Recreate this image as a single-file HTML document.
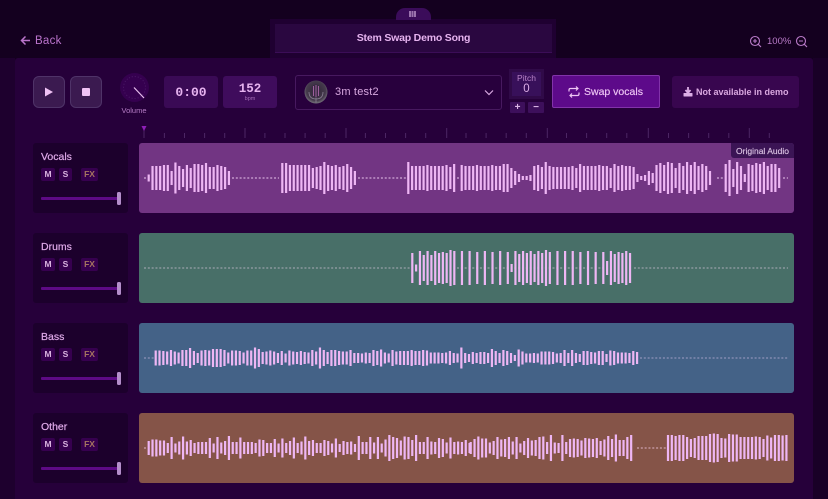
<!DOCTYPE html>
<html><head><meta charset="utf-8"><title>Stem Swap</title>
<style>
*{box-sizing:border-box;margin:0;padding:0}
html,body{width:828px;height:499px;overflow:hidden;background:#14001f;font-family:"Liberation Sans",sans-serif}
.a{position:absolute}
.t{position:absolute;white-space:nowrap;line-height:1}
.c{text-align:center}
.card{position:absolute;left:33px;width:95px;height:70px;background:#1c002c;border-radius:3px}
.card b{position:absolute;left:8px;top:8px;font-size:10.5px;line-height:12px;font-weight:400;color:#dfa9e9;-webkit-text-stroke:.2px #dfa9e9}
.btn{position:absolute;top:25px;height:13px;background:#36004f;border-radius:2px;font-size:8.5px;line-height:13px;text-align:center;font-weight:700;color:#d9b3e0}
.m{left:8px;width:14px}.s{left:26px;width:13px}.fx{left:48px;width:17px;color:#a57560}
.sl{position:absolute;left:8px;top:54px;width:78px;height:3px;background:#5d0a85;border-radius:1px}
.th{position:absolute;left:84px;top:49px;width:4px;height:13px;background:#b48ecb;border-radius:1.5px}
.tr{position:absolute;left:139px;width:655px;height:69.5px;border-radius:3px}
</style></head><body>
<div class="a" style="left:0;top:58px;width:15px;height:441px;background:#1e002e"></div>
<div class="a" style="left:15px;top:58px;width:798px;height:441px;background:#26003a;border-radius:3px 3px 0 0"></div>
<div class="a" style="left:813px;top:58px;width:15px;height:441px;background:#190027"></div>
<div class="a" style="left:270px;top:19px;width:286px;height:39px;background:#1f0031"></div>
<div class="a" style="left:275px;top:24px;width:277px;height:29px;background:#2a0740;border-bottom:1px solid #3b0d57"></div>
<div class="a" style="left:396px;top:8px;width:35px;height:12px;background:#3b0c5a;border-radius:9px 9px 0 0"></div>
<div class="a" style="left:409px;top:11px;width:1.5px;height:6px;background:#9a72ad;box-shadow:2.5px 0 #9a72ad,5px 0 #9a72ad"></div>
<div class="t c" style="left:275px;top:33px;width:277px;font-size:10.5px;font-weight:700;letter-spacing:-.2px;color:#e6b3ef">Stem Swap Demo Song</div>
<div class="t" style="left:35px;top:35.5px;font-size:11.5px;color:#bb74cc;letter-spacing:.25px">Back</div>
<div class="t" style="left:767px;top:37px;font-size:9.5px;color:#b97ac8">100%</div>

<div class="a" style="left:33px;top:76px;width:32px;height:32px;background:#3b1a50;border:1px solid #4f3368;border-radius:6px"></div>
<div class="a" style="left:70px;top:76px;width:32px;height:32px;background:#3b1a50;border:1px solid #4f3368;border-radius:6px"></div>
<div class="a" style="left:120px;top:73px;width:29px;height:29px;background:#35004f;border-radius:50%"></div>
<div class="t c" style="left:114px;top:106.5px;width:40px;font-size:7.5px;color:#b57cc5">Volume</div>
<div class="a" style="left:164px;top:76px;width:54px;height:32px;background:#3a0a55;border-radius:3px"></div>
<div class="t c" style="left:164px;top:86px;width:54px;font:700 13px/1 'Liberation Mono',monospace;color:#e6b3ef">0:00</div>
<div class="a" style="left:223px;top:76px;width:54px;height:32px;background:#3f0c5c;border-radius:3px"></div>
<div class="t c" style="left:223px;top:82.5px;width:54px;font:700 12.5px/1 'Liberation Mono',monospace;color:#e6b3ef">152</div>
<div class="t c" style="left:223px;top:97px;width:54px;font-size:5.5px;color:#a36bb5">bpm</div>

<div class="a" style="left:295px;top:75px;width:207px;height:35px;border:1px solid #47195f;border-radius:3px;background:#28003d"></div>
<div class="t" style="left:335px;top:87px;font-size:11px;color:#d8a8e0;letter-spacing:.2px">3m test2</div>

<div class="a" style="left:509px;top:69px;width:35px;height:30px;background:#300a48"></div>
<div class="a" style="left:512px;top:72px;width:29px;height:24px;background:#38105a"></div>
<div class="t c" style="left:509px;top:73.5px;width:35px;font-size:8.5px;color:#bb84c9">Pitch</div>
<div class="t c" style="left:509px;top:84px;width:35px;font-size:11.5px;color:#dcaee6">0</div>
<div class="a" style="left:510px;top:102px;width:15px;height:11px;background:#3d0f5b;border-radius:1px"></div>
<div class="a" style="left:528px;top:102px;width:16px;height:11px;background:#3d0f5b;border-radius:1px"></div>
<div class="t c" style="left:510px;top:102.5px;width:15px;font-size:10px;font-weight:700;color:#dcb5e6">+</div>
<div class="t c" style="left:528px;top:102.5px;width:16px;font-size:10px;font-weight:700;color:#dcb5e6">−</div>

<div class="a" style="left:552px;top:75px;width:108px;height:33px;background:#5d0a8a;border:1px solid #8233aa;border-radius:2px"></div>
<div class="t" style="left:584px;top:87px;font-size:10.5px;color:#efc6f5;-webkit-text-stroke:.15px #efc6f5">Swap vocals</div>
<div class="a" style="left:672px;top:76px;width:127px;height:32px;background:#38064f;border-radius:3px"></div>
<div class="t" style="left:696px;top:87.5px;font-size:9px;font-weight:700;color:#d9a8e0">Not available in demo</div>

<div class="card" style="top:143px"><b>Vocals</b><div class="btn m">M</div><div class="btn s">S</div><div class="btn fx">FX</div><div class="sl"></div><div class="th"></div></div>
<div class="card" style="top:233px"><b>Drums</b><div class="btn m">M</div><div class="btn s">S</div><div class="btn fx">FX</div><div class="sl"></div><div class="th"></div></div>
<div class="card" style="top:323px"><b>Bass</b><div class="btn m">M</div><div class="btn s">S</div><div class="btn fx">FX</div><div class="sl"></div><div class="th"></div></div>
<div class="card" style="top:413px"><b>Other</b><div class="btn m">M</div><div class="btn s">S</div><div class="btn fx">FX</div><div class="sl"></div><div class="th"></div></div>

<div class="tr" style="top:143.3px;background:#723583"></div>
<div class="tr" style="top:233.3px;background:#486f68"></div>
<div class="tr" style="top:323px;background:#446287"></div>
<div class="tr" style="top:413px;background:#855448"></div>

<svg class="a" style="left:0;top:0" width="828" height="499" viewBox="0 0 828 499" fill="none">
<defs><radialGradient id="av" cx=".5" cy=".45" r=".6"><stop offset="0" stop-color="#2f2436"/><stop offset=".7" stop-color="#453a4c"/><stop offset="1" stop-color="#8a8a90"/></radialGradient></defs>
<path d="M30 40.5H22M25.5 36.5L21.5 40.5L25.5 44.5" stroke="#bb74cc" stroke-width="1.5"/>
<circle cx="755" cy="41" r="4.5" stroke="#b97ac8" stroke-width="1.1"/><path d="M758.3 44.3L761 47M753 41h4M755 39v4" stroke="#b97ac8" stroke-width="1.1"/>
<circle cx="801" cy="41" r="4.5" stroke="#b97ac8" stroke-width="1.1"/><path d="M804.3 44.3L807 47M799 41h4" stroke="#b97ac8" stroke-width="1.1"/>
<path d="M45 87.5V96.5L53 92Z" fill="#f0c2f5"/>
<rect x="82" y="88" width="8" height="8" rx="1" fill="#f0c2f5"/>
<circle cx="134.5" cy="87.5" r="11" stroke="#5a2a78" stroke-width="1" stroke-dasharray="1 2" transform="rotate(-120 134.5 87.5)" stroke-opacity=".6"/>
<path d="M134 87.5L144 98" stroke="#e8c0ee" stroke-width="1.2"/>
<circle cx="316" cy="92" r="11.5" fill="url(#av)"/>
<rect x="312" y="84.5" width="8" height="13" rx="4" fill="#3a2a44"/>
<path d="M313.5 86v10M316 85v12M318.5 86v10" stroke="#b76fb2" stroke-width=".8"/>
<path d="M316 97.5v5M309 92c0 5 3 7 7 7s7-2 7-7" stroke="#8a7f94" stroke-width=".8"/>
<path d="M485 90.5L489 94.5L493 90.5" stroke="#d8a8e0" stroke-width="1.2"/>
<path d="M569 91.5v-1.500c0-1 .6-1.500 1.500-1.500H578M576 86.500l2 2-2 2M579 92.500v1.500c0 1-.6 1.500-1.500 1.500H570M572 93.500l-2 2 2 2" stroke="#efc6f5" stroke-width="1.2"/>
<path d="M688 87v5M685.5 90l2.500 3 2.500-3" stroke="#ddaee6" stroke-width="1.8"/>
<rect x="683.5" y="93" width="9" height="3.5" rx=".5" fill="#ddaee6"/>
<path d="M164.4 133v5M184.5 133v5M204.6 133v5M224.7 133v5M264.9 133v5M285 133v5M305.1 133v5M325.2 133v5M365.4 133v5M385.5 133v5M405.6 133v5M425.7 133v5M466 133v5M486.1 133v5M506.2 133v5M526.3 133v5M566.5 133v5M586.6 133v5M606.7 133v5M626.8 133v5M668.5 133v5M688.6 133v5M708.7 133v5M728.8 133v5M769.3 133v5" stroke="#4c2664" stroke-width="1"/>
<path d="M245 128v10M346 128v10M446.7 128v10M547.3 128v10M648.3 128v10M749.3 128v10M144 130v8" stroke="#4c2664" stroke-width="1"/>
<path d="M141.5 126h5l-2.500 5z" fill="#8f1fb8"/>

<path d="M232 178H279M358 178H406M457 178H459M717 178H723M783 178H788M144 178H147" stroke="#e9c5ee" stroke-width="1.2" stroke-dasharray="2 1.82" stroke-opacity=".8"/>
<path d="M144 268H411M634 268H788M457 268H604" stroke="#d6c6dc" stroke-width="1.1" stroke-dasharray="2 1.82" stroke-opacity=".7"/>
<path d="M144 358H154M640 358H788" stroke="#c8b8e0" stroke-width="1.1" stroke-dasharray="2 1.82" stroke-opacity=".7"/>
<path d="M144 448H147M637 448H666" stroke="#e6bcd0" stroke-width="1.2" stroke-dasharray="2 1.82" stroke-opacity=".75"/>

<g stroke="#eeb6f4" stroke-width="2.2">
<path d="M144.88 178m3.82-3.5v7m0-3.5m3.82-12v24m0-12m3.82-12v24m0-12m3.82-12v24m0-12m3.82-13v26m0-13m3.82-13v26m0-13m3.82-7v14m0-7m3.82-15.5v31m0-15.5m3.82-12v24m0-12m3.82-9v18m0-9m3.82-13v26m0-13m3.82-10v20m0-10m3.82-14v28m0-14m3.82-14v28m0-14m3.82-13v26m0-13m3.82-15v30m0-15m3.82-11v22m0-11m3.82-11v22m0-11m3.82-13v26m0-13m3.82-12v24m0-12m3.82-11v22m0-11m3.82-7v14m0-7"/>
<path d="M278.48 178m3.82-15v30m0-15m3.82-15v30m0-15m3.82-13v26m0-13m3.82-13v26m0-13m3.82-13v26m0-13m3.82-13v26m0-13m3.82-13v26m0-13m3.82-13v26m0-13m3.82-10v20m0-10m3.82-11v22m0-11m3.82-12v24m0-12m3.82-16v32m0-16m3.82-13v26m0-13m3.82-12v24m0-12m3.82-13v26m0-13m3.82-11v22m0-11m3.82-12v24m0-12m3.82-14v28m0-14m3.82-11v22m0-11m3.82-7v14m0-7"/>
<path d="M404.48 178m3.82-16v32m0-16m3.82-12v24m0-12m3.82-12v24m0-12m3.82-12v24m0-12m3.82-12v24m0-12m3.82-13v26m0-13m3.82-12v24m0-12m3.82-12v24m0-12m3.82-12v24m0-12m3.82-12v24m0-12m3.82-13v26m0-13m3.82-11v22m0-11m3.82-14v28m0-14"/>
<path d="M457.88 178m3.82-13v26m0-13m3.82-12v24m0-12m3.82-12v24m0-12m3.82-12v24m0-12m3.82-13v26m0-13m3.82-12v24m0-12m3.82-12v24m0-12m3.82-12v24m0-12m3.82-13v26m0-13m3.82-12v24m0-12m3.82-12v24m0-12m3.82-14v28m0-14m3.82-14v28m0-14m3.82-10v20m0-10m3.82-7v14m0-7m3.82-4v8m0-4m3.82-2v4m0-2m3.82-2v4m0-2m3.82-3v6m0-3m3.82-12v24m0-12m3.82-13v26m0-13m3.82-11v22m0-11m3.82-16v32m0-16m3.82-12v24m0-12m3.82-11v22m0-11m3.82-11v22m0-11m3.82-11v22m0-11m3.82-11v22m0-11m3.82-11v22m0-11m3.82-12v24m0-12m3.82-10v20m0-10m3.82-14v28m0-14m3.82-12v24m0-12m3.82-12v24m0-12m3.82-12v24m0-12m3.82-12v24m0-12m3.82-13v26m0-13m3.82-12v24m0-12m3.82-12v24m0-12m3.82-10v20m0-10m3.82-14v28m0-14m3.82-12v24m0-12m3.82-13v26m0-13m3.82-12v24m0-12m3.82-12v24m0-12m3.82-11v22m0-11m3.82-4v8m0-4m3.82-2v4m0-2m3.82-3v6m0-3m3.82-7v14m0-7m3.82-5v10m0-5m3.82-13v26m0-13m3.82-15v30m0-15m3.82-13v26m0-13m3.82-16v32m0-16m3.82-15v30m0-15m3.82-10v20m0-10m3.82-15v30m0-15m3.82-12v24m0-12m3.82-16v32m0-16m3.82-13v26m0-13m3.82-16v32m0-16m3.82-12v24m0-12m3.82-14v28m0-14m3.82-12v24m0-12m3.82-7v14m0-7"/>
<path d="M721.88 178m3.82-14v28m0-14m3.82-18v36m0-18m3.82-9v18m0-9m3.82-16v32m0-16m3.82-12v24m0-12m3.82-4v8m0-4m3.82-14v28m0-14m3.82-13v26m0-13m3.82-15v30m0-15m3.82-14v28m0-14m3.82-16v32m0-16m3.82-12v24m0-12m3.82-14v28m0-14m3.82-14v28m0-14m3.82-10v20m0-10"/>

<path d="M408.48 268m3.82-15v30m0-15m3.82-3.5v7m0-3.5m3.82-17v34m0-17m3.82-13v26m0-13m3.82-17v34m0-17m3.82-13v26m0-13m3.82-17v34m0-17m3.82-15v30m0-15m3.82-16v32m0-16m3.82-15v30m0-15m3.82-18v36m0-18m3.82-17v34m0-17m7.64-17v34m0-17m7.64-17v34m0-17m7.64-16v32m0-16m7.64-17v34m0-17m7.64-16v32m0-16m7.64-17v34m0-17m7.64-16v32m0-16m3.82-4v8m0-4m3.82-17v34m0-17m3.82-14v28m0-14m3.82-17v34m0-17m3.82-15v30m0-15m3.82-17v34m0-17m3.82-14v28m0-14m3.82-17v34m0-17m3.82-15v30m0-15m3.82-18v36m0-18m3.82-16v32m0-16m7.64-17v34m0-17m7.64-17v34m0-17m7.64-17v34m0-17m7.64-16v32m0-16m7.64-17v34m0-17m7.64-16v32m0-16m7.64-16v32m0-16m3.82-7v14m0-7m3.82-17v34m0-17m3.82-14v28m0-14m3.82-16v32m0-16m3.82-15v30m0-15m3.82-17v34m0-17m3.82-15v30m0-15"/>

<path d="M151.88 358m3.82-7.5v15m0-7.5m3.82-7.5v15m0-7.5m3.82-7v14m0-7m3.82-6.5v13m0-6.5m3.82-8v16m0-8m3.82-6.5v13m0-6.5m3.82-5.5v11m0-5.5m3.82-8v16m0-8m3.82-8v16m0-8m3.82-10v20m0-10m3.82-7v14m0-7m3.82-5v10m0-5m3.82-7.5v15m0-7.5m3.82-8v16m0-8m3.82-7.5v15m0-7.5m3.82-9v18m0-9m3.82-9v18m0-9m3.82-9v18m0-9m3.82-8v16m0-8m3.82-5.5v11m0-5.5m3.82-7.5v15m0-7.5m3.82-7.5v15m0-7.5m3.82-7v14m0-7m3.82-5.5v11m0-5.5m3.82-7.5v15m0-7.5m3.82-7.5v15m0-7.5m3.82-10.5v21m0-10.5m3.82-9v18m0-9m3.82-6v12m0-6m3.82-6.5v13m0-6.5m3.82-7.5v15m0-7.5m3.82-6.5v13m0-6.5m3.82-5v10m0-5m3.82-7v14m0-7m3.82-4.5v9m0-4.5m3.82-7.5v15m0-7.5m3.82-6.5v13m0-6.5m3.82-6v12m0-6m3.82-7v14m0-7m3.82-6v12m0-6m3.82-5.5v11m0-5.5m3.82-8v16m0-8m3.82-6.5v13m0-6.5m3.82-10.5v21m0-10.5m3.82-8v16m0-8m3.82-6v12m0-6m3.82-8v16m0-8m3.82-8v16m0-8m3.82-7v14m0-7m3.82-6.5v13m0-6.5m3.82-6.5v13m0-6.5m3.82-8v16m0-8m3.82-5v10m0-5m3.82-5v10m0-5m3.82-4.5v9m0-4.5m3.82-5.5v11m0-5.5m3.82-5v10m0-5m3.82-8v16m0-8m3.82-7v14m0-7m3.82-8.5v17m0-8.5m3.82-5.5v11m0-5.5m3.82-4.5v9m0-4.5m3.82-8v16m0-8m3.82-6.5v13m0-6.5m3.82-7v14m0-7m3.82-7v14m0-7m3.82-7v14m0-7m3.82-8v16m0-8"/>
<path d="M407.88 358m3.82-7v14m0-7m3.82-7v14m0-7m3.82-7v14m0-7m3.82-8v16m0-8m3.82-7.5v15m0-7.5m3.82-5.5v11m0-5.5m3.82-5.5v11m0-5.5m3.82-5.5v11m0-5.5m3.82-5v10m0-5m3.82-5.5v11m0-5.5m3.82-7v14m0-7m3.82-5v10m0-5m3.82-4.5v9m0-4.5m3.82-10.5v21m0-10.5m3.82-5v10m0-5m3.82-4v8m0-4m3.82-6v12m0-6m3.82-5v10m0-5m3.82-6v12m0-6m3.82-6v12m0-6m3.82-5v10m0-5m3.82-9v18m0-9m3.82-7v14m0-7m3.82-5v10m0-5m3.82-8v16m0-8m3.82-7v14m0-7m3.82-5v10m0-5m3.82-3v6m0-3m3.82-8.5v17m0-8.5m3.82-6.5v13m0-6.5m3.82-4.5v9m0-4.5m3.82-4.5v9m0-4.5m3.82-5v10m0-5m3.82-4.5v9m0-4.5m3.82-6.5v13m0-6.5m3.82-6.5v13m0-6.5m3.82-6.5v13m0-6.5m3.82-6v12m0-6m3.82-4.5v9m0-4.5m3.82-5v10m0-5m3.82-8v16m0-8m3.82-5v10m0-5m3.82-8v16m0-8m3.82-5v10m0-5m3.82-4v8m0-4m3.82-7v14m0-7m3.82-7v14m0-7m3.82-6v12m0-6m3.82-5.5v11m0-5.5m3.82-7v14m0-7m3.82-7v14m0-7m3.82-4v8m0-4m3.82-7.5v15m0-7.5m3.82-7v14m0-7m3.82-5.5v11m0-5.5m3.82-5.5v11m0-5.5m3.82-5.5v11m0-5.5m3.82-5v10m0-5m3.82-7v14m0-7m3.82-6v12m0-6"/>

<path d="M144.88 448m3.82-7v14m0-7m3.82-8.5v17m0-8.5m3.82-8.5v17m0-8.5m3.82-7.5v15m0-7.5m3.82-7.5v15m0-7.5m3.82-5v10m0-5m3.82-11v22m0-11m3.82-4.5v9m0-4.5m3.82-6.5v13m0-6.5m3.82-11.5v23m0-11.5m3.82-6.5v13m0-6.5m3.82-8v16m0-8m3.82-5v10m0-5m3.82-6v12m0-6m3.82-6v12m0-6m3.82-6v12m0-6m3.82-10v20m0-10m3.82-4.5v9m0-4.5m3.82-11v22m0-11m3.82-5.5v11m0-5.5m3.82-7v14m0-7m3.82-12v24m0-12m3.82-6v12m0-6m3.82-6v12m0-6m3.82-10.5v21m0-10.5m3.82-6v12m0-6m3.82-6v12m0-6m3.82-6v12m0-6m3.82-5v10m0-5m3.82-8.5v17m0-8.5m3.82-8v16m0-8m3.82-5v10m0-5m3.82-5v10m0-5m3.82-9v18m0-9m3.82-4.5v9m0-4.5m3.82-9.5v19m0-9.5m3.82-5v10m0-5m3.82-7v14m0-7m3.82-10.5v21m0-10.5m3.82-5v10m0-5m3.82-6.5v13m0-6.5m3.82-11.5v23m0-11.5m3.82-7v14m0-7m3.82-8v16m0-8m3.82-5v10m0-5m3.82-5v10m0-5m3.82-8v16m0-8m3.82-7v14m0-7m3.82-4.5v9m0-4.5m3.82-9.5v19m0-9.5m3.82-4v8m0-4m3.82-7v14m0-7m3.82-6v12m0-6m3.82-6.5v13m0-6.5m3.82-4v8m0-4m3.82-12v24m0-12m3.82-6v12m0-6m3.82-6v12m0-6m3.82-11v22m0-11m3.82-5.5v11m0-5.5m3.82-11v22m0-11m3.82-4.5v9m0-4.5m3.82-8.5v17m0-8.5m3.82-13v26m0-13m3.82-11v22m0-11m3.82-10v20m0-10m3.82-7.5v15m0-7.5m3.82-11.5v23m0-11.5m3.82-11v22m0-11m3.82-8v16m0-8m3.82-13v26m0-13m3.82-6v12m0-6m3.82-6v12m0-6m3.82-11v22m0-11m3.82-6.5v13m0-6.5m3.82-6v12m0-6m3.82-10v20m0-10m3.82-9v18m0-9m3.82-5.5v11m0-5.5m3.82-10.5v21m0-10.5m3.82-6v12m0-6m3.82-6.5v13m0-6.5m3.82-6v12m0-6m3.82-8v16m0-8m3.82-5v10m0-5"/>
<path d="M466.9 448m3.82-6v12m0-6m3.82-9v18m0-9m3.82-11.5v23m0-11.5m3.82-9.5v19m0-9.5m3.82-9.5v19m0-9.5m3.82-5.5v11m0-5.5m3.82-7v14m0-7m3.82-11v22m0-11m3.82-8.5v17m0-8.5m3.82-9v18m0-9m3.82-11v22m0-11m3.82-6.5v13m0-6.5m3.82-11v22m0-11m3.82-4.5v9m0-4.5m3.82-7v14m0-7m3.82-10v20m0-10m3.82-7.5v15m0-7.5m3.82-8v16m0-8m3.82-11v22m0-11m3.82-11.5v23m0-11.5m3.82-6v12m0-6m3.82-13v26m0-13m3.82-5.5v11m0-5.5m3.82-5v10m0-5m3.82-13v26m0-13m3.82-6v12m0-6m3.82-9v18m0-9m3.82-9.5v19m0-9.5m3.82-9v18m0-9m3.82-7.5v15m0-7.5m3.82-10v20m0-10m3.82-9.5v19m0-9.5m3.82-9v18m0-9m3.82-10v20m0-10m3.82-7v14m0-7m3.82-8.5v17m0-8.5m3.82-12v24m0-12m3.82-9v18m0-9m3.82-13.5v27m0-13.5m3.82-8v16m0-8m3.82-8v16m0-8m3.82-11v22m0-11m3.82-13v26m0-13"/>
<path d="M664.18 448m3.82-13v26m0-13m3.82-13v26m0-13m3.82-12v24m0-12m3.82-13v26m0-13m3.82-13v26m0-13m3.82-11v22m0-11m3.82-9v18m0-9m3.82-10v20m0-10m3.82-12v24m0-12m3.82-12v24m0-12m3.82-12v24m0-12m3.82-14v28m0-14m3.82-14.5v29m0-14.5m3.82-14v28m0-14m3.82-10v20m0-10m3.82-9.5v19m0-9.5m3.82-14v28m0-14m3.82-13.5v27m0-13.5m3.82-13.5v27m0-13.5m3.82-11v22m0-11m3.82-11v22m0-11m3.82-11v22m0-11m3.82-11v22m0-11m3.82-11.5v23m0-11.5m3.82-11v22m0-11m3.82-9v18m0-9m3.82-12.5v25m0-12.5m3.82-10.5v21m0-10.5m3.82-13v26m0-13m3.82-13v26m0-13m3.82-12.5v25m0-12.5m3.82-13v26m0-13"/>
</g>
</svg>
<div class="a" style="left:731px;top:143.3px;width:63px;height:15px;background:#3b1455;border-radius:0 3px 0 3px"></div>
<div class="t c" style="left:731px;top:146.5px;width:63px;font-size:8.5px;color:#dcc4e4;-webkit-text-stroke:.15px #dcc4e4">Original Audio</div>
</body></html>
